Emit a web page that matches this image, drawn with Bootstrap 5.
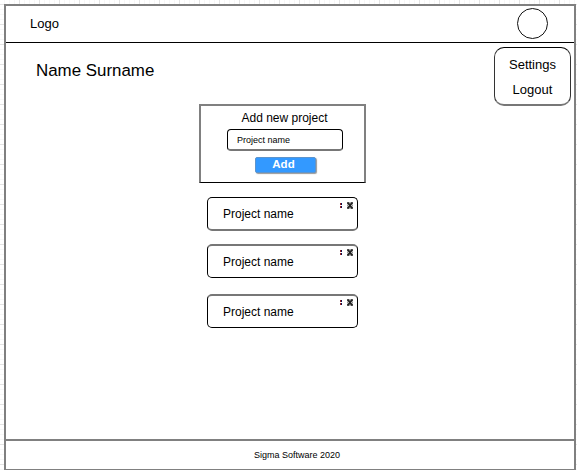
<!DOCTYPE html>
<html lang="en">
<head>
<meta charset="utf-8">
<meta name="viewport" content="width=device-width, initial-scale=1">
<title>Projects</title>
<link href="https://cdn.jsdelivr.net/npm/bootstrap@5.3.0/dist/css/bootstrap.min.css" rel="stylesheet">
<style>
  html, body { height: 100%; }
  body {
    font-family: "Liberation Sans", Arial, sans-serif;
    color: #000; font-size: 12px; line-height: 14px;
    padding: 4px 1px 0 4px; overflow: hidden;
    background:
      repeating-linear-gradient(90deg, transparent 0 19px, #e3e3e3 19px 20px),
      repeating-linear-gradient(180deg, transparent 0 4px, #e3e3e3 4px 5px, transparent 5px 20px),
      repeating-linear-gradient(90deg, transparent 0 4px, #f7f7f7 4px 5px),
      repeating-linear-gradient(180deg, transparent 0 4px, #f7f7f7 4px 5px), #fff;
  }
  .frame { border: 2px solid #808080; border-bottom-width: 1px; background: #fff; }
  .topbar { height: 37px; border-bottom: 1px solid #000; padding: 0 26px 0 24px; }
  .logo { font-size: 13px; }
  .avatar { width: 31px; height: 31px; margin-top: -1px; border: 1px solid #111; }
  .user-name { font-size: 16.9px; line-height: 20px; padding: 18px 0 0 30px; }
  .user-menu { top: 4px; right: 3px; width: 77px; height: 59px; border: solid;
    border-width: 1px 1px 2px 1px; border-color: #000 #333 #777 #333; border-radius: 10px; background: #fff;
    font-size: 13px; line-height: 25px; padding: 4px 0 0 0; }
  .new-project { width: 167px; height: 79px; margin: 23px 0 0 193px;
    border: 2px solid #808080; border-bottom: 1px solid #000; padding-top: 5px; }
  .new-project label { font-size: 12px; padding-left: 4px; }
  .name-input { width: 116px; height: 22px; margin: 4px 0 0 5px; padding: 0 0 0 9px; border: 1px solid #000;
    border-bottom: 2px solid #777; border-radius: 4px; font-size: 9px; color: #000; outline: 0; background: #fff; }
  .name-input::placeholder { color: #000; opacity: 1; }
  .add-btn { width: 61px; height: 16px; margin: 6px 0 0 5px; padding: 0 3px 3px 0; background: #39f; color: #fff;
    border: 1px solid #5d94cc; border-radius: 2px; font-size: 11.5px; font-weight: 700; line-height: 10px;
    box-shadow: 1px 1px 1px #999; }
  .project { width: 151px; height: 34px; border: 1px solid #000; border-radius: 5px; padding: 0 4px 0 15px; margin-left: 201px; }
  .project.low { border-bottom: 2px solid #777; margin-top: 14px; }
  .project.high { border-top: 2px solid #777; }
  .second { margin-top: 13px; }
  .third { margin-top: 16px; }
  .tools { height: 7px; gap: 5px; }
  .low .tools { margin-top: 4px; }
  .high .tools { margin-top: 3px; }
  .foot { height: 30px; border-top: 2px solid #808080; font-size: 9px; padding: 0 0 0 14px; }
</style>
<script src="https://cdn.jsdelivr.net/npm/bootstrap@5.3.0/dist/js/bootstrap.bundle.min.js"></script>
</head>
<body>
<svg class="d-none">
  <symbol id="dots" viewBox="0 0 2 7"><path d="M0 1h1v2H0zM0 4h1v2H0z" fill="#a02020"/><path d="M1 1h1v2H1zM1 4h1v2H1z" fill="#101050"/></symbol>
  <symbol id="cross" viewBox="0 0 6 7"><path d="M0 1h2M4 1h2M0 6h2M4 6h2" stroke="#222" stroke-width="1.4"/><path d="M2 1h2M2 6h2" stroke="#666"/><path d="M1 1l4 5M5 1L1 6" stroke="#222" stroke-width="2"/><path d="M.5 2.5v2M5.5 2.5v2" stroke="#999"/></symbol>
</svg>
<div class="frame h-100 d-flex flex-column">
  <header class="topbar d-flex align-items-center justify-content-between flex-shrink-0">
    <span class="logo">Logo</span>
    <div class="avatar rounded-circle"></div>
  </header>
  <main class="flex-grow-1 position-relative">
    <div class="user-name">Name Surname</div>
    <nav class="user-menu position-absolute text-center">
      <a class="d-block text-reset text-decoration-none" href="#">Settings</a>
      <a class="d-block text-reset text-decoration-none" href="#">Logout</a>
    </nav>
    <form class="new-project d-flex flex-column align-items-center">
      <label for="pname">Add new project</label>
      <input id="pname" class="name-input" placeholder="Project name">
      <button type="button" class="btn add-btn">Add</button>
    </form>
    <div class="project low d-flex justify-content-between">
      <span class="align-self-center">Project name</span>
      <div class="tools d-flex"><svg width="2" height="7"><use href="#dots"/></svg><svg width="6" height="7"><use href="#cross"/></svg></div>
    </div>
    <div class="project high second d-flex justify-content-between">
      <span class="align-self-center">Project name</span>
      <div class="tools d-flex"><svg width="2" height="7"><use href="#dots"/></svg><svg width="6" height="7"><use href="#cross"/></svg></div>
    </div>
    <div class="project high third d-flex justify-content-between">
      <span class="align-self-center">Project name</span>
      <div class="tools d-flex"><svg width="2" height="7"><use href="#dots"/></svg><svg width="6" height="7"><use href="#cross"/></svg></div>
    </div>
  </main>
  <footer class="foot d-flex align-items-center justify-content-center flex-shrink-0">Sigma Software 2020</footer>
</div>
</body>
</html>
